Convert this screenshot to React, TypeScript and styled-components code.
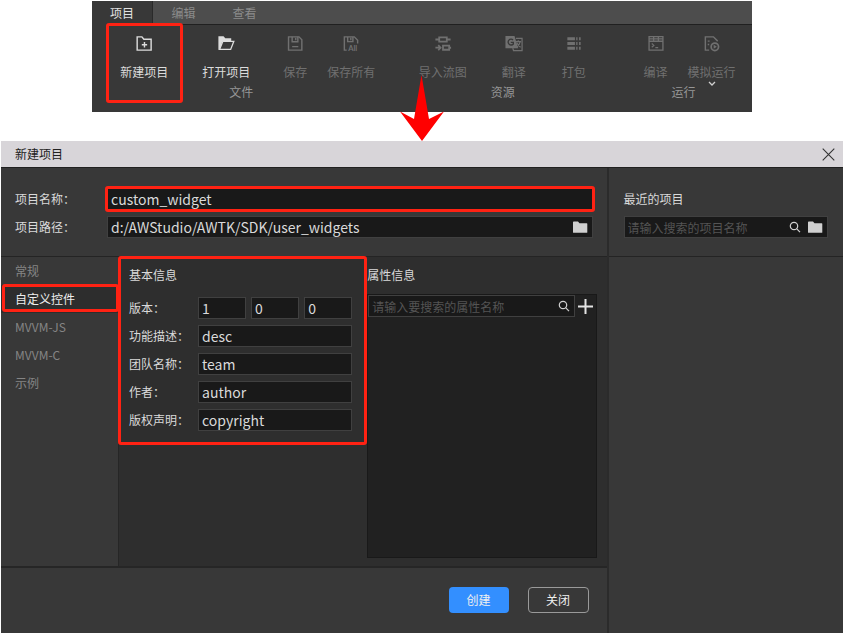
import React from "react";
import styled, { createGlobalStyle, css } from "styled-components";

const RED = "#ff2213";

const Global = createGlobalStyle`
  *, *::before, *::after { box-sizing: border-box; }
  body { margin: 0; background: #fff; }
  body, button, input {
    font-family: "Noto Sans CJK SC", "Noto Sans", sans-serif;
    font-size: 12px;
    line-height: 20px;
  }
  h1, h2 { margin: 0; font-size: 12px; font-weight: 400; }
  button { margin: 0; padding: 0; border: 0; background: none; color: inherit; }
  ul { margin: 0; padding: 0; list-style: none; }
`;

const Page = styled.div`
  padding: 1px 1px;
`;

/* Ribbon */
const Ribbon = styled.header`
  position: relative;
  margin: 0 91px;
  background: #383838;
`;
const TabBar = styled.nav`
  display: flex;
  height: 24px;
  background: #4d4d4d;
  border-bottom: 1px solid #202020;
`;
const Tab = styled.button<{ $active?: boolean }>`
  width: 61px;
  height: 24px;
  ${(p) =>
    p.$active
      ? css`color: #e2e2e2; background: #383838; border-right: 1px solid #2a2a2a;`
      : css`color: #8b8b8b;`}
`;
const Groups = styled.div`
  display: flex;
  padding-bottom: 10px;
`;
const Group = styled.section<{ $grow: number }>`
  flex: ${(p) => p.$grow} 1 0;
  position: relative;
  display: flex;
  flex-direction: column;
  align-items: center;
  & + &::before {
    content: "";
    position: absolute;
    left: 0;
    top: 15px;
    bottom: 4px;
    width: 1px;
    background: #272727;
  }
`;
const Tools = styled.div`
  display: flex;
`;
const Tool = styled.button<{ $w: number; $marked?: boolean }>`
  position: relative;
  width: ${(p) => p.$w}px;
  height: 57px;
  padding-top: 9px;
  display: flex;
  flex-direction: column;
  align-items: center;
  gap: 9px;
  white-space: nowrap;
  color: #dcdcdc;
  &:disabled { color: #707070; }
  ${(p) =>
    p.$marked &&
    css`
      &::after {
        content: "";
        position: absolute;
        inset: -2px 2px -21px 3px;
        border: 3px solid ${RED};
        border-radius: 3px;
      }
    `}
`;
const GroupName = styled.span`
  line-height: 20px;
  color: #969696;
`;
const Chevron = styled.svg`
  position: absolute;
  left: 50%;
  margin-left: -4px;
  bottom: -5px;
`;
const Arrow = styled.svg`
  position: absolute;
  z-index: 2;
  left: 50%;
  margin-left: -22px;
  bottom: -29px;
`;

/* Dialog */
const Dialog = styled.main`
  margin-top: 29px;
  background: #383838;
  color: #dadada;
`;
const TitleBar = styled.div`
  display: flex;
  align-items: center;
  justify-content: space-between;
  height: 27px;
  padding: 0 8px 0 14px;
  background: #d8d5d9;
  border-bottom: 1px solid #202020;
  color: #222;
`;
const Close = styled.button`
  display: flex;
`;
const Columns = styled.div`
  display: flex;
`;
const MainColumn = styled.div`
  flex: 607 1 0;
  min-width: 0;
`;
const Recent = styled.aside`
  flex: 235 1 0;
  min-width: 0;
  border-left: 2px solid #2b2b2b;
`;
const Head = styled.div<{ $side: number }>`
  height: 89px;
  padding: 17px ${(p) => p.$side}px 0;
  border-bottom: 1px solid #242424;
`;
const Row = styled.div`
  display: flex;
  align-items: center;
  height: 28px;
`;
const Label = styled.label<{ $w: number }>`
  flex: none;
  width: ${(p) => p.$w}px;
`;
const Box = styled.div<{ $marked?: boolean }>`
  position: relative;
  flex: 1;
  min-width: 0;
  display: flex;
  align-items: center;
  gap: 6px;
  height: 22px;
  padding-right: 4px;
  background: #191919;
  border: 1px solid #404040;
  color: #d0d0d0;
  ${(p) =>
    p.$marked &&
    css`
      &::after {
        content: "";
        position: absolute;
        inset: -3px;
        border: 3px solid ${RED};
        border-radius: 3px;
        pointer-events: none;
      }
    `}
`;
const Field = styled.input`
  flex: 1;
  min-width: 0;
  width: 100%;
  height: 20px;
  padding: 0 3px;
  border: 0;
  outline: 0;
  background: none;
  color: #dadada;
  font-size: 14px;
  &::placeholder { color: #545454; font-size: 12px; opacity: 1; }
`;
const IconButton = styled.button`
  flex: none;
  display: flex;
  color: #d0d0d0;
`;
const Body = styled.div`
  display: flex;
  min-height: 311px;
  border-bottom: 2px solid #262626;
`;
const Nav = styled.ul`
  flex: none;
  width: 118px;
  border-right: 1px solid #262626;
`;
const NavItem = styled.button<{ $active?: boolean }>`
  position: relative;
  display: block;
  width: 100%;
  height: 28px;
  padding-left: 14px;
  text-align: left;
  color: #858585;
  ${(p) =>
    p.$active &&
    css`
      color: #ededed;
      background: #2d2d2d;
      &::after {
        content: "";
        position: absolute;
        inset: -1px -1px 1px 1px;
        border: 3px solid ${RED};
        border-radius: 3px;
      }
    `}
`;
const Content = styled.div`
  flex: 1;
  min-width: 0;
  display: grid;
  grid-template-columns: minmax(0, 249fr) minmax(0, 230fr);
  align-items: start;
  padding-right: 10px;
  background: #2e2e2e;
`;
const Basic = styled.section`
  position: relative;
  padding: 8px 15px 11px 10px;
  &::after {
    content: "";
    position: absolute;
    inset: -1px 0 0 -1px;
    border: 3px solid ${RED};
    border-radius: 3px;
    pointer-events: none;
  }
`;
const SectionTitle = styled.h2`
  height: 20px;
  line-height: 20px;
`;
const Rows = styled.div`
  margin-top: 9px;
`;
const Version = styled.div`
  flex: 1;
  min-width: 0;
  display: flex;
  gap: 5px;
`;
const Attributes = styled.section`
  min-width: 0;
  padding-top: 8px;
`;
const AttributeList = styled.div`
  margin-top: 9px;
  min-height: 264px;
  background: #212121;
  border: 1px solid #191919;
`;
const SearchRow = styled.div`
  display: flex;
  align-items: center;
  gap: 3px;
  padding-right: 3px;
`;
const Footer = styled.footer`
  display: flex;
  justify-content: flex-end;
  gap: 19px;
  padding: 19px 18px 20px;
`;
const Action = styled.button<{ $primary?: boolean }>`
  width: ${(p) => (p.$primary ? 60 : 61)}px;
  height: 26px;
  border-radius: 4px;
  color: #f0f0f0;
  ${(p) =>
    p.$primary ? css`background: #338fff;` : css`border: 1px solid #9a9a9a;`}
`;

const Glyph = ({ children }: { children: React.ReactNode }) => (
  <svg width="20" height="20" viewBox="0 0 20 20" fill="none" stroke="currentColor" strokeWidth="1.5" aria-hidden="true">
    {children}
  </svg>
);
const NewIcon = () => (
  <Glyph>
    <path d="M2.8 17V3h5l2 2.5h7.7V17z" />
    <path d="M10.5 8.5v5.6M7.7 11.3h5.6" />
  </Glyph>
);
const OpenIcon = () => (
  <Glyph>
    <path d="M2 16.5V2.3h5.4l1.8 2.2h6.3v2.8H6.2L3.4 16.5z" fill="currentColor" stroke="none" />
    <path d="M3.2 16.2 6.6 7.8h11.6l-3.3 8.4z" fill="#383838" strokeWidth="1.4" />
  </Glyph>
);
const SaveIcon = () => (
  <Glyph>
    <path d="M3.2 17V3h11l3 3v11z" />
    <path d="M7 3v5.2h6V3M10.8 4v2.5M7 13.3h6.5" />
  </Glyph>
);
const SaveAllIcon = () => (
  <Glyph>
    <path d="M5.5 17H3V3h10.5L17 6.5V10M6.5 3v5H12V3M9.8 4v2.5" />
    <text x="7" y="18" fontSize="8" fontWeight="700" fontFamily="Lato, sans-serif" fill="currentColor" stroke="none">All</text>
  </Glyph>
);
const FlowIcon = () => (
  <Glyph>
    <path d="M6 3.5h8v4.5H6zM2 5.8h4M14 5.8h4M10 12.3h6.5v4.3H10zM16.5 14.5h2" strokeWidth="1.9" />
    <path d="M2 14.4h5M5 11.7l2.5 2.7L5 17.1" strokeWidth="1.8" />
  </Glyph>
);
const TranslateIcon = () => (
  <Glyph>
    <path d="M1 2h9.5l4 13H1z" fill="currentColor" stroke="none" />
    <path d="M9 6.2A3.1 3.1 0 1 0 9.3 10.5V8.8H6.6" stroke="#383838" strokeWidth="1.4" />
    <path d="M12 4.6h6.5v12.8H9.5l-.8-2.5" strokeWidth="1.3" />
    <path d="M11.5 8h6M14.5 6.7V8M16.5 8.2c-.7 3-2 4.5-4 6M13 9.2c1 2 2 3.5 4 4.8" strokeWidth="1.2" />
  </Glyph>
);
const PackIcon = () => (
  <Glyph>
    <path d="M3 5h8M3 10h8M3 15h8" strokeWidth="3.2" />
    <path d="M12.3 5h1.4M12.3 10h1.4M12.3 15h1.4M15.3 5h1.7M15.3 10h1.7M15.3 15h1.7" strokeWidth="3.2" />
  </Glyph>
);
const CompileIcon = () => (
  <Glyph>
    <path d="M2.7 2.7h14.6v14.2H2.7zM3 7.6h14M3 5.1h14M7.5 3v4.5M12.5 3v4.5" strokeWidth="1.4" />
    <path d="m5.5 10 2.3 2-2.3 2M9.3 14.3h3" strokeWidth="1.2" />
  </Glyph>
);
const SimulateIcon = () => (
  <Glyph>
    <path d="M7 17H3V3h8.5L16 7.5M5.5 7.5h2M5.5 11h1.5" />
    <circle cx="13" cy="13.5" r="3.9" strokeWidth="1.8" />
    <path d="m11.8 11.4 3.3 2.1-3.3 2.1z" fill="currentColor" stroke="none" />
  </Glyph>
);
const FolderIcon = () => (
  <svg width="16" height="14" viewBox="0 0 16 14" fill="currentColor" aria-hidden="true">
    <path d="M1 2.2Q1 1.4 1.8 1.4H6L7.5 3.2h7.2q.6 0 .6.6v8.4q0 .6-.6.6H1.6q-.6 0-.6-.6z" />
  </svg>
);
const SearchIcon = () => (
  <svg width="12" height="12" viewBox="0 0 12 12" fill="none" stroke="currentColor" strokeWidth="1.2" aria-hidden="true">
    <circle cx="5" cy="5" r="3.7" />
    <path d="m7.8 7.8 3.2 3.4" />
  </svg>
);

const FIELDS = [
  { id: "desc", label: "功能描述：", value: "desc" },
  { id: "team", label: "团队名称：", value: "team" },
  { id: "author", label: "作者：", value: "author" },
  { id: "copyright", label: "版权声明：", value: "copyright" },
];
const CATEGORIES = ["常规", "自定义控件", "MVVM-JS", "MVVM-C", "示例"];

export default function App() {
  return (
    <>
      <Global />
      <Page>
        <Ribbon>
          <TabBar>
            <Tab $active>项目</Tab>
            <Tab>编辑</Tab>
            <Tab>查看</Tab>
          </TabBar>
          <Groups>
            <Group $grow={299}>
              <Tools>
                <Tool $w={82} $marked><NewIcon />新建项目</Tool>
                <Tool $w={82}><OpenIcon />打开项目</Tool>
                <Tool $w={56} disabled><SaveIcon />保存</Tool>
                <Tool $w={56} disabled><SaveAllIcon />保存所有</Tool>
              </Tools>
              <GroupName>文件</GroupName>
            </Group>
            <Group $grow={225}>
              <Tools>
                <Tool $w={82} disabled><FlowIcon />导入流图</Tool>
                <Tool $w={60} disabled><TranslateIcon />翻译</Tool>
                <Tool $w={60} disabled><PackIcon />打包</Tool>
              </Tools>
              <GroupName>资源</GroupName>
            </Group>
            <Group $grow={137}>
              <Tools>
                <Tool $w={56} disabled><CompileIcon />编译</Tool>
                <Tool $w={56} disabled>
                  <SimulateIcon />模拟运行
                  <Chevron width="8" height="6" viewBox="0 0 8 6" fill="none" stroke="#d0d0d0" strokeWidth="1.3">
                    <path d="m1 1 3 3 3-3" />
                  </Chevron>
                </Tool>
              </Tools>
              <GroupName>运行</GroupName>
            </Group>
          </Groups>
          <Arrow width="44" height="66" viewBox="0 0 44 66" fill="#ff0000" aria-hidden="true">
            <path d="M21.5 0 29 44 44 36.5 22 66 0 36.5 14 44z" />
          </Arrow>
        </Ribbon>

        <Dialog>
          <TitleBar>
            <h1>新建项目</h1>
            <Close aria-label="关闭窗口">
              <svg width="13" height="13" viewBox="0 0 13 13" stroke="#333" strokeWidth="1.1" aria-hidden="true">
                <path d="m.7.7 11.6 11.6M12.3.7.7 12.3" />
              </svg>
            </Close>
          </TitleBar>
          <Columns>
            <MainColumn>
              <Head $side={14}>
                <Row>
                  <Label $w={92} htmlFor="name">项目名称：</Label>
                  <Box $marked><Field id="name" defaultValue="custom_widget" /></Box>
                </Row>
                <Row>
                  <Label $w={92} htmlFor="path">项目路径：</Label>
                  <Box>
                    <Field id="path" defaultValue="d:/AWStudio/AWTK/SDK/user_widgets" />
                    <IconButton aria-label="浏览"><FolderIcon /></IconButton>
                  </Box>
                </Row>
              </Head>
              <Body>
                <Nav>
                  {CATEGORIES.map((c, i) => (
                    <li key={c}><NavItem $active={i === 1}>{c}</NavItem></li>
                  ))}
                </Nav>
                <Content>
                  <Basic>
                    <SectionTitle>基本信息</SectionTitle>
                    <Rows>
                      <Row>
                        <Label $w={69} htmlFor="major">版本：</Label>
                        <Version>
                          <Box><Field id="major" defaultValue="1" /></Box>
                          <Box><Field aria-label="次版本" defaultValue="0" /></Box>
                          <Box><Field aria-label="修订版本" defaultValue="0" /></Box>
                        </Version>
                      </Row>
                      {FIELDS.map((f) => (
                        <Row key={f.id}>
                          <Label $w={69} htmlFor={f.id}>{f.label}</Label>
                          <Box><Field id={f.id} defaultValue={f.value} /></Box>
                        </Row>
                      ))}
                    </Rows>
                  </Basic>
                  <Attributes>
                    <SectionTitle>属性信息</SectionTitle>
                    <AttributeList>
                      <SearchRow>
                        <Box>
                          <Field aria-label="搜索属性" placeholder="请输入要搜索的属性名称" />
                          <IconButton aria-label="搜索"><SearchIcon /></IconButton>
                        </Box>
                        <IconButton aria-label="添加属性">
                          <svg width="15" height="15" viewBox="0 0 15 15" stroke="#e4e4e4" strokeWidth="2" aria-hidden="true">
                            <path d="M7.5 0v15M0 7.5h15" />
                          </svg>
                        </IconButton>
                      </SearchRow>
                    </AttributeList>
                  </Attributes>
                </Content>
              </Body>
              <Footer>
                <Action $primary>创建</Action>
                <Action>关闭</Action>
              </Footer>
            </MainColumn>
            <Recent>
              <Head $side={15}>
                <Row><h2>最近的项目</h2></Row>
                <Row>
                  <Box>
                    <Field aria-label="搜索项目" placeholder="请输入搜索的项目名称" />
                    <IconButton aria-label="搜索"><SearchIcon /></IconButton>
                    <IconButton aria-label="打开目录"><FolderIcon /></IconButton>
                  </Box>
                </Row>
              </Head>
            </Recent>
          </Columns>
        </Dialog>
      </Page>
    </>
  );
}
